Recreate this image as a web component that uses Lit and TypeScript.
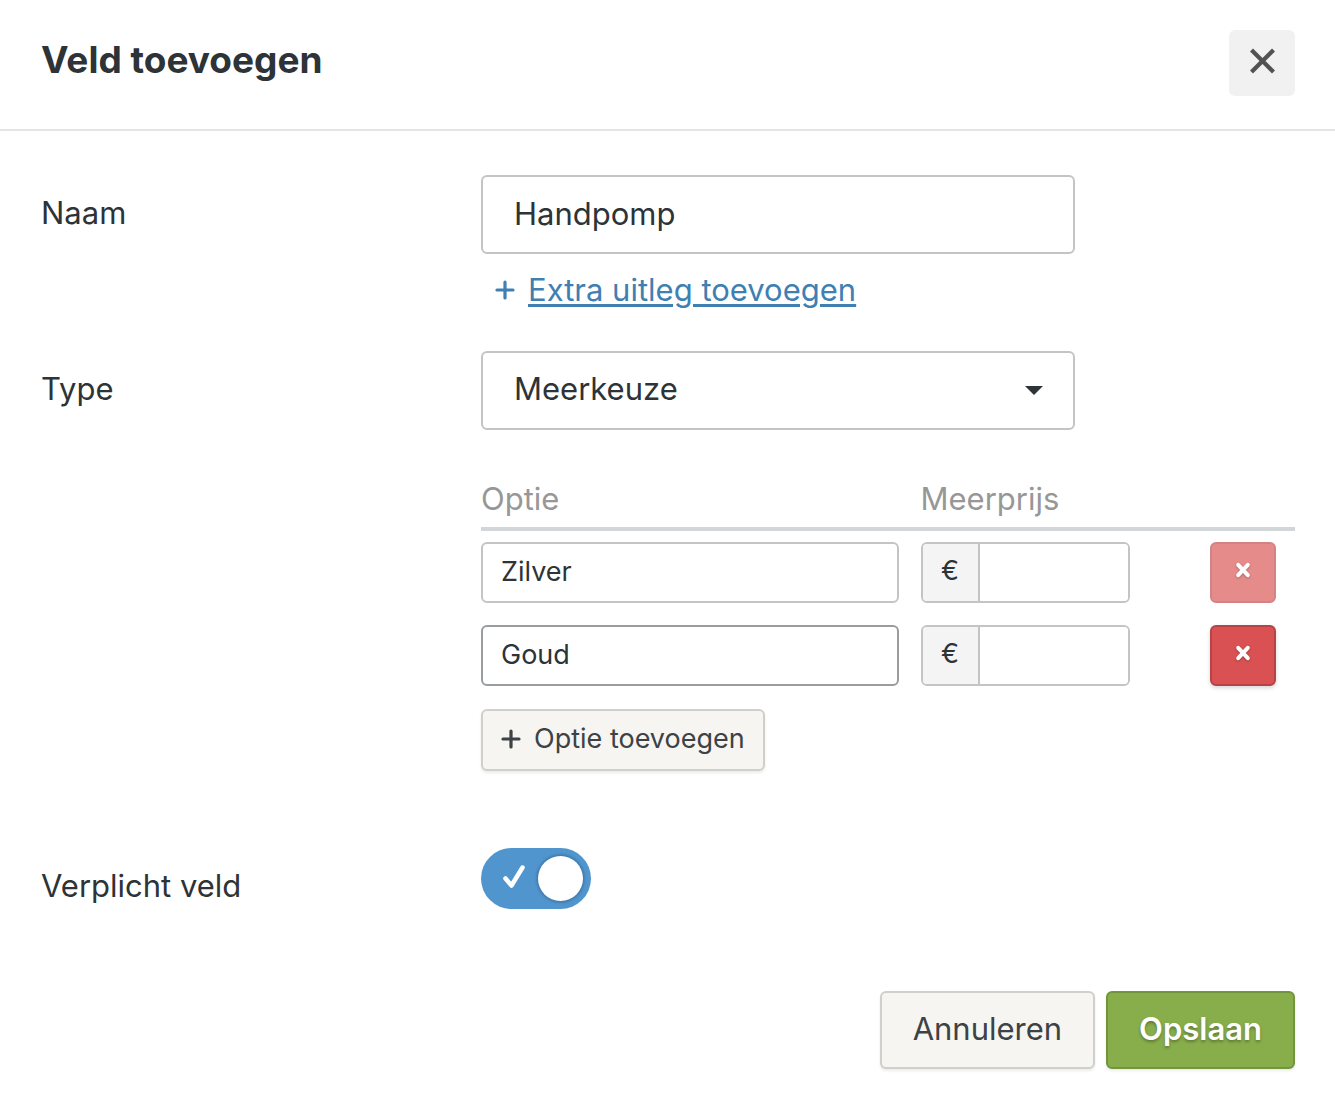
import { LitElement, html, css, svg } from "lit";
import { customElement, state } from "lit/decorators.js";

interface Option {
  name: string;
  price: string;
  locked: boolean;
}

const plusIcon = html`<svg class="plus" viewBox="0 0 20 20" aria-hidden="true">
  ${svg`<path d="M10 2v16M2 10h16" fill="none" stroke="currentColor" stroke-width="3.2" stroke-linecap="round"/>`}
</svg>`;

const removeIcon = html`<svg class="remove-icon" viewBox="0 0 16 18" aria-hidden="true">
  ${svg`<path d="M3.2 3.8l9.600 10.400M12.800 3.800l-9.600 10.400" fill="none" stroke="currentColor" stroke-width="4" stroke-linecap="round"/>`}
</svg>`;

@customElement("app-root")
export class AppRoot extends LitElement {
  @state() private options: Option[] = [
    { name: "Zilver", price: "", locked: true },
    { name: "Goud", price: "", locked: false },
  ];

  static styles = css`
    :host {
      display: block;
      min-height: 100vh;
      background: #fff;
      color: #2d3336;
      font-family: Inter, Roboto, "Liberation Sans", sans-serif;
      font-size: 31px;
      line-height: 40px;
    }
    * {
      box-sizing: border-box;
    }
    input,
    select,
    button {
      margin: 0;
      font: inherit;
      color: inherit;
      border-radius: 6px;
    }
    button {
      cursor: pointer;
    }
    .header {
      display: flex;
      align-items: flex-start;
      justify-content: space-between;
      padding: 30px 40px 33px 41px;
      border-bottom: 2px solid #e4e4e4;
    }
    .title {
      margin: 0;
      padding-top: 8px;
      font-size: 37px;
      line-height: 44px;
      font-weight: 700;
    }
    .close {
      display: flex;
      align-items: center;
      justify-content: center;
      width: 66px;
      height: 66px;
      padding: 0 0 4px;
      border: 0;
      background: #f1f1f1;
      color: #525252;
    }
    .close-icon {
      width: 28px;
      height: 28px;
    }
    .form {
      padding: 44px 40px 32px 41px;
    }
    .row {
      display: grid;
      grid-template-columns: 440fr 814fr;
    }
    .label {
      padding-top: 18px;
    }
    .type-row {
      margin-top: 41px;
    }
    .required-row {
      margin-top: 77px;
    }
    .control {
      display: block;
      width: 73%;
      height: 79px;
      padding: 0 31px 3px;
      border: 2px solid #c4c4c4;
      background: #fff;
      appearance: none;
    }
    .select-wrap {
      display: grid;
      grid-template-columns: 73%;
      align-items: center;
    }
    .select-wrap > * {
      grid-area: 1 / 1;
    }
    .select-wrap .control {
      width: 100%;
    }
    .caret {
      justify-self: end;
      width: 18px;
      height: 9px;
      margin-right: 32px;
      pointer-events: none;
    }
    .extra {
      display: flex;
      align-items: center;
      gap: 13px;
      margin-top: 16px;
      padding-left: 14px;
      color: #407fb2;
    }
    .extra a {
      color: inherit;
      text-decoration-thickness: 3px;
      text-underline-offset: 3px;
    }
    .plus {
      flex: none;
      width: 20px;
      height: 20px;
    }
    .options {
      width: 100%;
      margin-top: 45px;
      border-collapse: separate;
      border-spacing: 0;
      table-layout: fixed;
    }
    .col-name {
      width: 54%;
    }
    .col-remove {
      width: 85px;
    }
    th {
      padding: 4px 0 8px;
      border-bottom: 4px solid #d2d6d9;
      color: #979797;
      font-weight: 400;
      text-align: left;
    }
    td {
      padding: 11px 0;
      font-size: 27px;
      line-height: 36px;
    }
    .option-name {
      display: block;
      width: 95%;
      height: 61px;
      padding: 0 18px 2px;
      border: 2px solid #c4c4c4;
      background: #fff;
    }
    .option-name.active {
      border-color: #999d9f;
    }
    .price {
      display: flex;
      width: 209px;
      height: 61px;
      border: 2px solid #c4c4c4;
      border-radius: 6px;
      overflow: hidden;
    }
    .currency {
      width: 57px;
      padding-top: 9px;
      border-right: 2px solid #c4c4c4;
      background: #f4f4f4;
      text-align: center;
    }
    .amount {
      flex: 1;
      min-width: 0;
      padding: 0 16px;
      border: 0;
      border-radius: 0;
      background: #fff;
    }
    .remove {
      display: flex;
      align-items: center;
      justify-content: center;
      width: 66px;
      height: 61px;
      padding: 0 0 5px;
      border: 2px solid #b64345;
      background: #d95152;
      color: #fff;
      box-shadow: 0 2px 4px rgba(0, 0, 0, 0.16);
    }
    .remove:disabled {
      border-color: #d38385;
      background: #e58c8b;
      box-shadow: none;
    }
    .remove-icon {
      width: 16px;
      height: 18px;
      filter: drop-shadow(0 1px 1px rgba(0, 0, 0, 0.25));
    }
    .button {
      display: inline-flex;
      align-items: center;
      justify-content: center;
      border: 2px solid #cfcfcb;
      background: #f6f5f1;
      color: #3c4245;
      box-shadow: 0 2px 3px rgba(0, 0, 0, 0.08);
      white-space: nowrap;
    }
    .add {
      gap: 13px;
      height: 62px;
      margin-top: 12px;
      padding: 0 18px 3px;
      font-size: 27px;
    }
    .toggle {
      position: relative;
      display: block;
      width: 110px;
      height: 61px;
    }
    .toggle-input {
      display: flex;
      align-items: center;
      justify-content: flex-end;
      width: 100%;
      height: 100%;
      padding-right: 8px;
      appearance: none;
      border-radius: 31px;
      background: #5095ce;
      cursor: pointer;
    }
    .toggle-input::after {
      content: "";
      width: 45px;
      height: 45px;
      border-radius: 50%;
      background: #fff;
      box-shadow: 0 0 2px 2px rgba(50, 85, 120, 0.35);
    }
    .toggle-input:not(:checked) {
      justify-content: flex-start;
      padding: 0 0 0 8px;
      background: #c4c4c4;
    }
    .check {
      position: absolute;
      left: 21px;
      top: 16px;
      width: 24px;
      height: 26px;
      pointer-events: none;
    }
    .footer {
      display: flex;
      justify-content: flex-end;
      gap: 11px;
      margin-top: 82px;
    }
    .footer .button {
      height: 78px;
      padding: 0 31px 3px;
    }
    .footer .save {
      border-color: #71943c;
      background: #88ad4b;
      color: #fff;
      font-weight: 600;
      text-shadow: 0 2px 3px rgba(0, 0, 0, 0.3);
    }
  `;

  private addOption() {
    this.options = [...this.options, { name: "", price: "", locked: false }];
  }

  private removeOption(index: number) {
    this.options = this.options.filter((_, i) => i !== index);
  }

  private renderOption(option: Option, index: number) {
    return html`<tr>
      <td>
        <input
          class="option-name ${index === 1 ? "active" : ""}"
          type="text"
          aria-label="Optie"
          .value=${option.name}
        />
      </td>
      <td>
        <label class="price">
          <span class="currency">€</span>
          <input class="amount" type="text" inputmode="decimal" aria-label="Meerprijs" .value=${option.price} />
        </label>
      </td>
      <td>
        <button
          class="remove"
          type="button"
          aria-label="Verwijderen"
          ?disabled=${option.locked}
          @click=${() => this.removeOption(index)}
        >
          ${removeIcon}
        </button>
      </td>
    </tr>`;
  }

  render() {
    return html`
      <header class="header">
        <h1 class="title">Veld toevoegen</h1>
        <button class="close" type="button" aria-label="Sluiten">
          <svg class="close-icon" viewBox="0 0 28 28" aria-hidden="true">
            <path d="M3.500 3l22 22M25.500 3l-22 22" fill="none" stroke="currentColor" stroke-width="4.200" stroke-linecap="butt" />
          </svg>
        </button>
      </header>
      <form class="form" @submit=${(e: Event) => e.preventDefault()}>
        <div class="row">
          <label class="label" for="name">Naam</label>
          <div>
            <input class="control" id="name" type="text" value="Handpomp" />
            <div class="extra">${plusIcon}<a href="#">Extra uitleg toevoegen</a></div>
          </div>
        </div>
        <div class="row type-row">
          <label class="label" for="type">Type</label>
          <div>
            <div class="select-wrap">
              <select class="control" id="type">
                <option>Meerkeuze</option>
              </select>
              <svg class="caret" viewBox="0 0 18 9" aria-hidden="true"><path d="M0 0h18L9 9z" fill="currentColor" /></svg>
            </div>
            <table class="options">
              <colgroup>
                <col class="col-name" />
                <col />
                <col class="col-remove" />
              </colgroup>
              <thead>
                <tr>
                  <th scope="col">Optie</th>
                  <th scope="col" colspan="2">Meerprijs</th>
                </tr>
              </thead>
              <tbody>
                ${this.options.map((o, i) => this.renderOption(o, i))}
              </tbody>
            </table>
            <button class="button add" type="button" @click=${this.addOption}>${plusIcon}<span>Optie toevoegen</span></button>
          </div>
        </div>
        <div class="row required-row">
          <label class="label" for="required">Verplicht veld</label>
          <div class="toggle">
            <input class="toggle-input" id="required" type="checkbox" role="switch" checked />
            <svg class="check" viewBox="0 0 24 26" aria-hidden="true">
              <path d="M3.500 14.500L9.500 21.500L20.500 3.500" fill="none" stroke="#fff" stroke-width="4.500" stroke-linecap="round" stroke-linejoin="round" />
            </svg>
          </div>
        </div>
        <div class="footer">
          <button class="button" type="button">Annuleren</button>
          <button class="button save" type="submit">Opslaan</button>
        </div>
      </form>
    `;
  }
}
